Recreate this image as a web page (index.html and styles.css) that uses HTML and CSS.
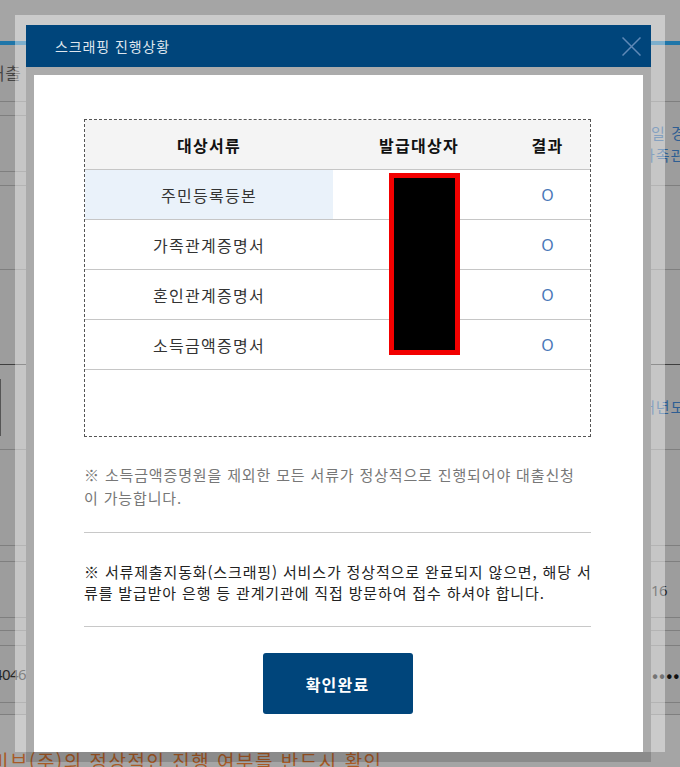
FILE: index.html
```html
<!DOCTYPE html>
<html lang="ko">
<head>
<meta charset="utf-8">
<title>스크래핑 진행상황</title>
<link rel="stylesheet" href="styles.css">
</head>
<body>
<div class="page">
  <div class="page-head"></div>
  <div class="page-rule"></div>
  <div class="page-body">
    <div class="side side-left">
      <div class="cell h57"><span class="pg-title">신용대출</span></div>
      <div class="cell h14"></div>
      <div class="cell h56"></div>
      <div class="cell h14"></div>
      <div class="cell h84"></div>
      <div class="cell h95 dark"></div>
      <div class="cell h85"><span class="edge"></span></div>
      <div class="cell h96"></div>
      <div class="cell h16"></div>
      <div class="cell h56"></div>
      <div class="cell h13"></div>
      <div class="cell h15"></div>
      <div class="cell h57"><span class="pg-num">14046</span></div>
      <div class="cell h12"></div>
    </div>
    <div class="side side-right">
      <div class="cell h57"></div>
      <div class="cell h84 stack"><span class="pg-link">일 경우</span><span class="pg-link shift">가족관계</span></div>
      <div class="cell h84"></div>
      <div class="cell h95 dark"></div>
      <div class="cell h85"><span class="pg-link shift">매년도</span></div>
      <div class="cell h96"></div>
      <div class="cell h16"></div>
      <div class="cell h56"><span class="pg-num">16</span></div>
      <div class="cell h13"></div>
      <div class="cell h15"></div>
      <div class="cell h57"><span class="pg-dots">••••••</span></div>
      <div class="cell h12"></div>
    </div>
  </div>
  <div class="page-foot"><span class="pg-warn">비브(주)의 정상적인 진행 여부를 반드시 확인</span></div>
</div>

<div class="dim-frame"></div>

<div class="dialog">
  <div class="dialog-head">
    <h1 class="dialog-title">스크래핑 진행상황</h1>
    <button class="dialog-close" type="button" aria-label="닫기">
      <svg width="19" height="19" viewBox="0 0 19 19"><path d="M0.5 0.5 L18.5 18.5 M18.5 0.5 L0.5 18.5" stroke="#5f89b7" stroke-width="1.5" fill="none"/></svg>
    </button>
  </div>
  <div class="dialog-body">
    <div class="doc-box">
      <div class="doc-grid">
        <div class="dc th">대상서류</div>
        <div class="dc th">발급대상자</div>
        <div class="dc th">결과</div>

        <div class="dc active">주민등록등본</div>
        <div class="dc"></div>
        <div class="dc ok">O</div>

        <div class="dc">가족관계증명서</div>
        <div class="dc"></div>
        <div class="dc ok">O</div>

        <div class="dc">혼인관계증명서</div>
        <div class="dc"></div>
        <div class="dc ok">O</div>

        <div class="dc">소득금액증명서</div>
        <div class="dc"></div>
        <div class="dc ok">O</div>
      </div>
      <div class="redact"></div>
    </div>

    <p class="note note-muted">※ 소득금액증명원을 제외한 모든 서류가 정상적으로 진행되어야 대출신청<br>이 가능합니다.</p>
    <p class="note note-dark">※ 서류제출지동화(스크래핑) 서비스가 정상적으로 완료되지 않으면, 해당 서<br>류를 발급받아 은행 등 관계기관에 직접 방문하여 접수 하셔야 합니다.</p>

    <div class="actions">
      <button class="confirm" type="button">확인완료</button>
    </div>
  </div>
</div>
</body>
</html>
```

FILE: styles.css
```css
html, body {
  margin: 0;
  padding: 0;
}

body {
  width: 680px;
  height: 767px;
  overflow: hidden;
  background: #a5a5a5;
  font-family: "Noto Sans CJK KR", "Noto Sans", sans-serif;
}

/* ---------- dimmed page behind the modal ---------- */
.page {
  width: 680px;
}

.page-head {
  height: 41px;
  background: #a5a5a5;
}

.page-rule {
  height: 4px;
  background: #1f76a9;
}

.page-body {
  display: flex;
  justify-content: space-between;
}

.side {
  overflow: hidden;
  background: #9d9d9d;
}

.side-left {
  width: 26px;
}

.side-right {
  width: 29px;
}

.cell {
  box-sizing: border-box;
  border-bottom: 1px solid #7f7f7f;
  display: flex;
  align-items: center;
  white-space: nowrap;
}

.side-left .cell {
  justify-content: flex-end;
}

.side-right .cell {
  justify-content: flex-start;
}

.cell.dark {
  border-bottom-color: #3f3f3f;
}

.cell.stack {
  flex-direction: column;
  align-items: flex-start;
  justify-content: center;
}

.h12 { height: 12px; }
.h13 { height: 13px; }
.h14 { height: 14px; }
.h15 { height: 15px; }
.h16 { height: 16px; }
.h56 { height: 56px; }
.h57 { height: 57px; }
.h84 { height: 84px; }
.h85 { height: 85px; }
.h95 { height: 95px; }
.h96 { height: 96px; }

.pg-title {
  font-size: 17px;
  line-height: 22px;
  color: #464646;
  padding-right: 4px;
  letter-spacing: 1px;
}

.edge {
  display: block;
  width: 1px;
  height: 57px;
  margin-right: 25px;
  background: #555;
}

.pg-num {
  font-family: "Noto Sans", sans-serif;
  font-size: 15px;
  line-height: 22px;
  color: #262626;
  letter-spacing: -0.6px;
}

.pg-link {
  font-size: 15px;
  line-height: 22px;
  color: #2e5e93;
  letter-spacing: 1px;
}

.pg-link.shift {
  margin-left: -10px;
}

.pg-dots {
  font-size: 18px;
  line-height: 22px;
  color: #111;
  letter-spacing: 1px;
  margin-left: 1px;
}

.page-foot {
  padding-top: 34px;
  white-space: nowrap;
  overflow: hidden;
}

.pg-warn {
  display: block;
  margin-left: -9px;
  font-size: 19px;
  line-height: 24px;
  color: #a85a26;
  letter-spacing: 1.5px;
}

/* ---------- modal ---------- */
.dim-frame {
  position: fixed;
  left: 15px;
  top: 15px;
  width: 650px;
  height: 737px;
  background: rgba(255, 255, 255, 0.42);
}

.dialog {
  position: fixed;
  left: 26px;
  top: 25px;
  width: 625px;
  height: 737px;
  background: rgba(0, 0, 0, 0.153);
  display: flex;
  flex-direction: column;
}

.dialog-head {
  height: 42px;
  flex: 0 0 42px;
  background: #00457b;
  display: flex;
  align-items: center;
  justify-content: space-between;
  padding: 0 10px 0 29px;
}

.dialog-title {
  margin: 0;
  font-size: 14px;
  font-weight: normal;
  line-height: 20px;
  letter-spacing: 0.9px;
  color: #dfe6ee;
}

.dialog-close {
  width: 19px;
  height: 19px;
  padding: 0;
  border: 0;
  background: transparent;
  display: block;
}

.dialog-close svg {
  display: block;
}

.dialog-body {
  flex: 1 1 auto;
  margin: 8px 8px 10px;
  background: #fff;
  padding: 44px 52px 0 50px;
}

.doc-box {
  position: relative;
  box-sizing: border-box;
  height: 318px;
  border: 1px dashed #555;
}

.doc-grid {
  display: grid;
  grid-template-columns: 248px 172px 85px;
  grid-auto-rows: 50px;
}

.dc {
  box-sizing: border-box;
  border-bottom: 1px solid #c6c6c6;
  display: flex;
  align-items: center;
  justify-content: center;
  font-size: 16px;
  line-height: 22px;
  letter-spacing: 1.3px;
  color: #333;
}

.dc.th {
  background: #f4f4f4;
  font-weight: bold;
  color: #111;
}

.dc.active {
  background: #eaf2fa;
}

.dc.ok {
  color: #4a78b8;
  font-family: "Noto Sans", sans-serif;
  letter-spacing: 0;
}

.redact {
  position: absolute;
  left: 304px;
  top: 53px;
  width: 71px;
  height: 182px;
  box-sizing: border-box;
  border: 5px solid #f20000;
  background: #000;
}

.note {
  margin: 0;
  font-size: 15px;
  letter-spacing: 0.85px;
  white-space: nowrap;
  border-bottom: 1px solid #c8c8c8;
}

.note-muted {
  color: #777;
  line-height: 23px;
  padding: 26px 0 23px;
}

.note-dark {
  color: #222;
  line-height: 21px;
  padding: 28px 0 23px;
}

.actions {
  display: flex;
  justify-content: center;
  padding-top: 26px;
}

.confirm {
  width: 150px;
  height: 61px;
  border: 0;
  border-radius: 3px;
  background: #00457b;
  color: #fff;
  font-family: "Noto Sans CJK KR", sans-serif;
  font-size: 16px;
  font-weight: bold;
  letter-spacing: 1.2px;
}
```
